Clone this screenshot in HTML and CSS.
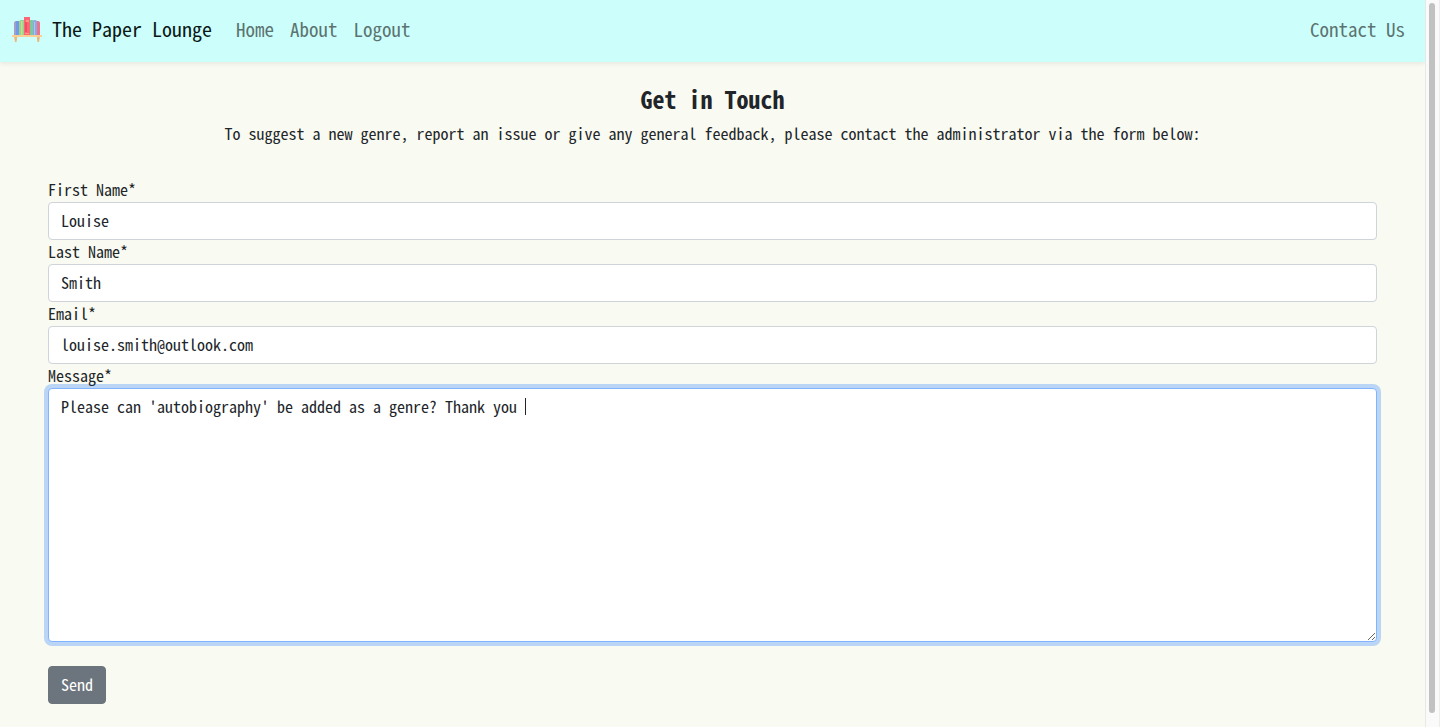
FILE: index.html
```html
<!DOCTYPE html>
<html lang="en">
<head>
<meta charset="utf-8">
<meta name="viewport" content="width=device-width, initial-scale=1">
<title>The Paper Lounge - Contact Us</title>
<link rel="stylesheet" href="styles.css">
</head>
<body>
<div class="page">
  <header class="navbar">
    <a class="brand" href="#">
      <svg class="brand-logo" viewBox="0 2 30 30" width="30" height="30" aria-hidden="true">
        <path d="M2 24h3v3l-.5 3H3zM25 24h3l-1 6h-1.500l-.5-3z" fill="#eeb479"/>
        <path d="M2 11q0-2 2-2h2v14H2z" fill="#a3a0c8"/>
        <path d="M4 9h3v14H4z" fill="#7597e8"/>
        <path d="M7 10q0-2 2-2h3v15H7z" fill="#8fd794"/>
        <path d="M9 9h1.500v14H9z" fill="#d9d87c"/>
        <path d="M18 8h3v15h-3z" fill="#7acb98"/>
        <path d="M21 9q0-1 1.500-1T25 9v14h-4z" fill="#8ba9e8"/>
        <path d="M22 10h1v13h-1z" fill="#b1c2ec"/>
        <path d="M25 9h1q2 0 2 2v12h-3z" fill="#f0718a"/>
        <path d="M12 5h6v18h-6z" fill="#ff6675"/>
        <path d="M13 10h2v10h-2z" fill="#f04f66"/>
        <path d="M14 8h3v2h-3zM13 21h4v1h-4z" fill="#ff9a82"/>
        <path d="M0 23h30v2H0z" fill="#f9cf94"/>
      </svg>
      <span>The Paper Lounge</span>
    </a>
    <nav class="links">
      <a href="#">Home</a>
      <a href="#">About</a>
      <a href="#">Logout</a>
      <a class="contact" href="#">Contact Us</a>
    </nav>
  </header>
  <main class="content">
    <div class="intro">
      <h1>Get in Touch</h1>
      <p>To suggest a new genre, report an issue or give any general feedback, please contact the administrator via the form below:</p>
    </div>
    <form class="form">
      <label for="first-name">First Name*</label>
      <input id="first-name" type="text" value="Louise">
      <label for="last-name">Last Name*</label>
      <input id="last-name" type="text" value="Smith">
      <label for="email">Email*</label>
      <input id="email" type="email" value="louise.smith@outlook.com">
      <label for="message">Message*</label>
      <div class="message">
        <textarea id="message" rows="10">Please can 'autobiography' be added as a genre? Thank you </textarea>
        <span class="caret"></span>
      </div>
      <button type="submit">Send</button>
    </form>
  </main>
</div>
<div class="scrollbar"><div class="thumb"></div></div>
</body>
</html>
```
FILE: styles.css
```css
* { box-sizing: border-box; }
body {
  margin: 0;
  display: flex;
  min-height: 100vh;
  background: #f9faf1;
  color: #212529;
  font: 16px/24px "Noto Sans Mono CJK SC", "DejaVu Sans Mono", monospace;
}
.page { flex: 1; min-width: 0; }
.navbar {
  display: flex;
  align-items: center;
  padding: 9px 12px 13px;
  background: #ccfffb;
  box-shadow: 0 2px 4px rgba(0, 0, 0, 0.07);
}
.navbar a { text-decoration: none; }
.brand {
  display: flex;
  align-items: center;
  gap: 10px;
  margin-right: 16px;
  color: #0b1716;
  font-size: 20px;
}
.brand-logo { width: 30px; height: 30px; }
.links { flex: 1; display: flex; }
.links a {
  padding: 8px;
  color: #5c7371;
  font-size: 19px;
}
.links .contact { margin-left: auto; }
.content { padding: 23px 48px; }
.intro { text-align: center; }
.intro h1 { margin: 0 0 8px; font-size: 24px; line-height: 28px; font-weight: 600; }
.intro p { margin: 0 0 32px; }
.form { display: flex; flex-direction: column; }
.form label { position: relative; z-index: 1; }
.form input, .form textarea {
  display: block;
  width: 100%;
  margin: 0;
  padding: 5px 12px 7px;
  border: 1px solid #ced4da;
  border-radius: 4px;
  background: #fff;
  color: #212529;
  font: inherit;
  outline: none;
}
.form input { height: 38px; }
.form input, .message { margin-top: 1px; }
.form input { margin-bottom: -1px; }
.message { position: relative; }
.form textarea {
  border-color: #80b4ff;
  box-shadow: 0 0 0 4px #bad5f6;
  resize: vertical;
}
.caret {
  position: absolute;
  left: 477px;
  top: 10px;
  width: 1px;
  height: 17px;
  background: #212529;
}
.form button {
  align-self: flex-start;
  margin-top: 24px;
  padding: 5px 12px 7px;
  border: 1px solid #6c757d;
  border-radius: 4px;
  background: #6c757d;
  color: #fff;
  font: inherit;
  font-weight: 500;
}
.scrollbar {
  position: sticky;
  top: 0;
  width: 15px;
  height: 100vh;
  padding: 3px 3px 14px;
  border-left: 1px solid #e8e8e8;
  border-right: 1px solid #ececec;
  background: #fafafa;
}
.thumb { height: 100%; margin: 0 1px 0 0; border-radius: 4px; background: #c1c1c1; }
```
